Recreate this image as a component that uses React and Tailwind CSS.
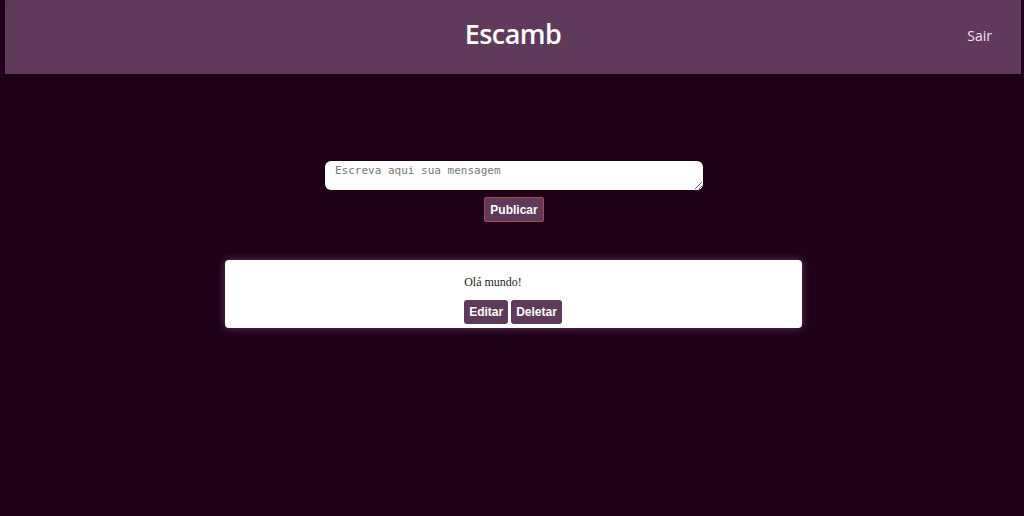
const App = () => {
	return (
		<div className="min-h-screen w-full bg-[#1f0119] font-['Liberation_Sans',sans-serif]">
			<header className="ml-[5px] mr-[3px] h-[74px] bg-[#5f3a5a] shadow-[0_1px_2px_rgba(0,0,0,0.5)] flex items-center relative pb-[6px]">
				<h1 className="flex-1 text-center text-[27px] font-semibold text-white font-['Open_Sans',sans-serif] tracking-[-0.6px]">
					Escamb
				</h1>
				<button className="absolute right-[29px] top-[25px] text-[14px] text-[#f3e1f0] font-['Open_Sans',sans-serif]">
					Sair
				</button>
			</header>

			<div className="flex flex-col items-center pt-[87px] pl-[4px]">
				<textarea
					placeholder="Escreva aqui sua mensagem"
					className="w-[378px] h-[29px] rounded-[6px] bg-white px-[10px] py-[2px] text-[11px] font-['DejaVu_Sans_Mono',monospace] text-gray-800 placeholder:text-[#777] outline-none"
				/>
				<button className="mt-[7px] h-[25px] px-[5px] bg-[#5f3a5a] border border-[#b04848] rounded-[2px] text-white font-bold text-[12px]">
					Publicar
				</button>
			</div>

			<div className="flex justify-center pt-[38px] pl-[2px]">
				<div className="w-[577px] h-[68px] bg-white rounded-[4px] shadow-[0_0_8px_rgba(150,90,150,0.6)] flex justify-center pt-[14px]">
					<div>
						<p className="text-[12px] text-[#222] font-['Liberation_Serif',serif] leading-[16px]">
							Olá mundo!
						</p>
						<div className="flex gap-[3px] mt-[10px]">
							<button className="h-[24px] px-[5px] bg-[#5f3a5a] rounded-[3px] text-white font-bold text-[12px]">
								Editar
							</button>
							<button className="h-[24px] px-[5px] bg-[#5f3a5a] rounded-[3px] text-white font-bold text-[12px]">
								Deletar
							</button>
						</div>
					</div>
				</div>
			</div>
		</div>
	);
};

export default App;
